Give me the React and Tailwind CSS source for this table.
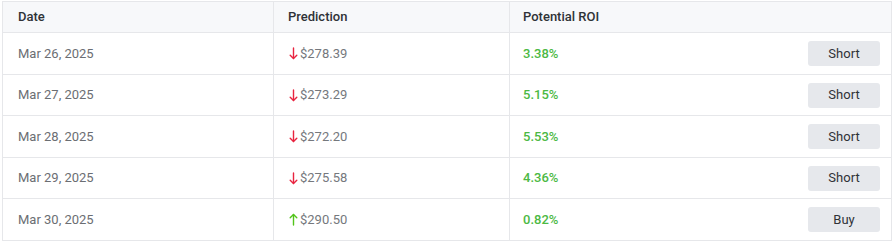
import React from "react";

const rows = [
  { date: "Mar 26, 2025", price: "278.39", up: false, roi: "3.38%", action: "Short", h: "h-[42px]" },
  { date: "Mar 27, 2025", price: "273.29", up: false, roi: "5.15%", action: "Short", h: "h-[41px]" },
  { date: "Mar 28, 2025", price: "272.20", up: false, roi: "5.53%", action: "Short", h: "h-[42px]" },
  { date: "Mar 29, 2025", price: "275.58", up: false, roi: "4.36%", action: "Short", h: "h-[41px]" },
  { date: "Mar 30, 2025", price: "290.50", up: true, roi: "0.82%", action: "Buy", h: "h-[41px]" },
];

function Arrow({ up }) {
  return (
    <svg width="9" height="13" viewBox="0 0 9 13" className={up ? "text-[#52c41a]" : "text-[#e8233f]"} fill="none" stroke="currentColor" strokeWidth="1.4" strokeLinecap="round" strokeLinejoin="round">
      {up ? (
        <>
          <path d="M4.5 12V1.5" />
          <path d="M1.2 4.8l3.3-3.3 3.3 3.3" />
        </>
      ) : (
        <>
          <path d="M4.5 1v10.5" />
          <path d="M1.2 8.2l3.3 3.3 3.3-3.3" />
        </>
      )}
    </svg>
  );
}

export default function App() {
  return (
    <div className="w-[893px] h-[243px] bg-white pt-px pl-[2px] pr-px font-['Roboto',sans-serif] text-[13px]">
      <div className="border border-[#e6e7ea]">
        {/* header */}
        <div className="grid grid-cols-[271px_236px_1fr] h-[31px] bg-[#f7f8fa] text-[#2f3237] font-medium border-b border-[#e6e7ea]">
          <div className="flex items-center pl-[15px] border-r border-[#e6e7ea]">Date</div>
          <div className="flex items-center pl-[14px] border-r border-[#e6e7ea]">Prediction</div>
          <div className="flex items-center pl-[13px]">Potential ROI</div>
        </div>
        {rows.map((r, i) => (
          <div
            key={r.date}
            className={`grid grid-cols-[271px_236px_1fr] ${r.h} ${i < rows.length - 1 ? "border-b border-[#e6e7ea]" : ""}`}
          >
            <div className="flex items-center pl-[15px] text-[#6b6e73] border-r border-[#e6e7ea]">{r.date}</div>
            <div className="flex items-center pl-[15px] text-[#75787d] border-r border-[#e6e7ea]">
              <Arrow up={r.up} />
              <span className="ml-[2px]">${r.price}</span>
            </div>
            <div className="flex items-center justify-between pl-[13px] pr-[11px]">
              <span className="text-[#4cb944] font-medium">{r.roi}</span>
              <button className="w-[72px] h-[25px] rounded-[3px] bg-[#e6e8ec] text-[#2f3237] text-[13px]">{r.action}</button>
            </div>
          </div>
        ))}
      </div>
    </div>
  );
}
